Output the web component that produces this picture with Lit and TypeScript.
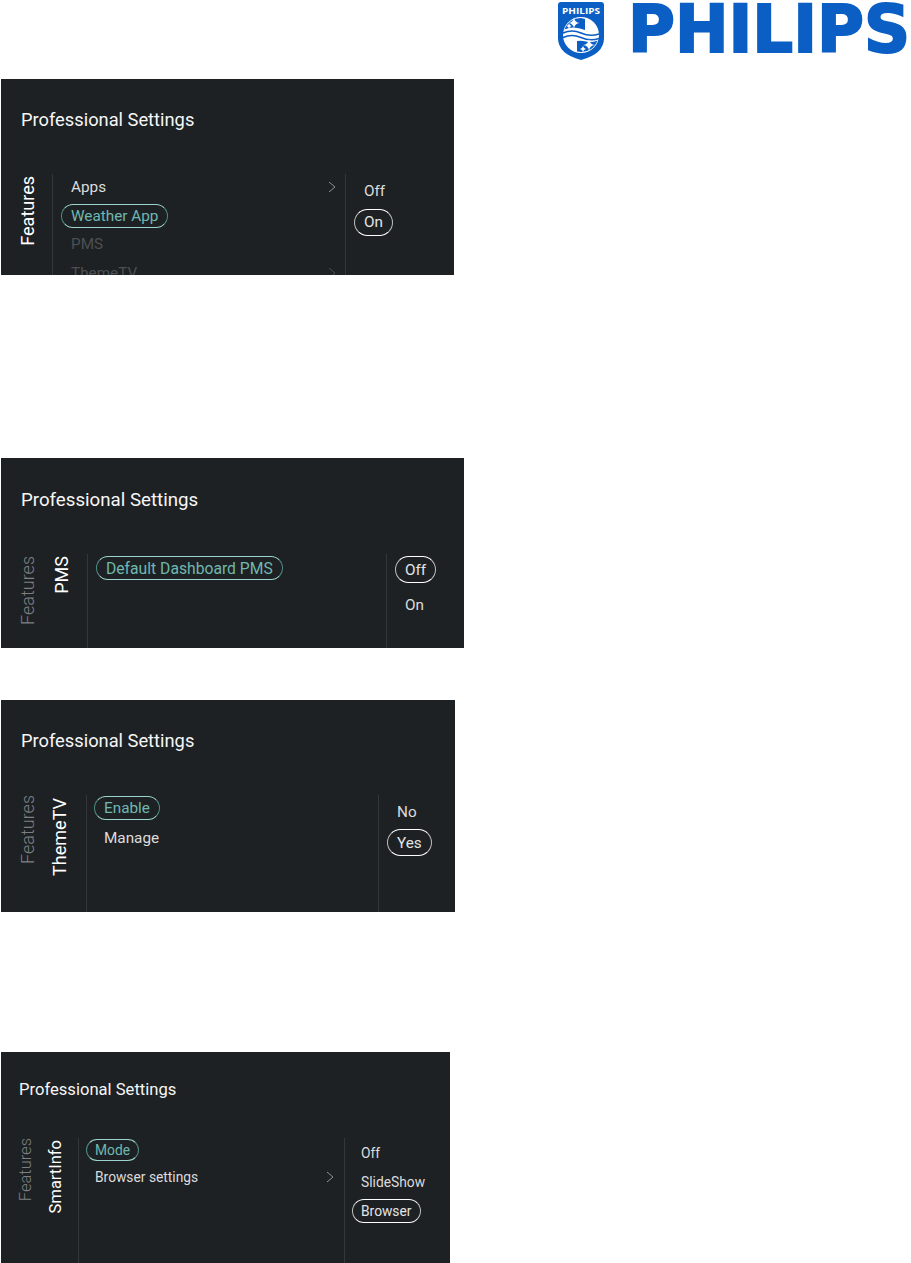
import { LitElement, html, css, svg } from "lit";
import { customElement, property } from "lit/decorators.js";

interface Row { label: string; selected?: boolean; dim?: boolean; arrow?: boolean }
interface PanelData {
  cls: string;
  rails: { label: string; active?: boolean }[];
  items: Row[];
  options: Row[];
}

const star = (cx: number, cy: number, r: number) =>
  svg`<path d="M${cx} ${cy - r}Q${cx + 0.6} ${cy - 0.6} ${cx + r} ${cy}Q${cx + 0.6} ${cy + 0.6} ${cx} ${cy + r}Q${cx - 0.6} ${cy + 0.6} ${cx - r} ${cy}Q${cx - 0.6} ${cy - 0.6} ${cx} ${cy - r}Z" fill="#fff"/>`;

const panels: PanelData[] = [
  {
    cls: "p1",
    rails: [{ label: "Features", active: true }],
    items: [
      { label: "Apps", arrow: true },
      { label: "Weather App", selected: true },
      { label: "PMS", dim: true },
      { label: "ThemeTV", dim: true, arrow: true },
    ],
    options: [{ label: "Off" }, { label: "On", selected: true }],
  },
  {
    cls: "p2",
    rails: [{ label: "Features" }, { label: "PMS", active: true }],
    items: [{ label: "Default Dashboard PMS", selected: true }],
    options: [{ label: "Off", selected: true }, { label: "On" }],
  },
  {
    cls: "p3",
    rails: [{ label: "Features" }, { label: "ThemeTV", active: true }],
    items: [{ label: "Enable", selected: true }, { label: "Manage" }],
    options: [{ label: "No" }, { label: "Yes", selected: true }],
  },
  {
    cls: "p4",
    rails: [{ label: "Features" }, { label: "SmartInfo", active: true }],
    items: [
      { label: "Mode", selected: true },
      { label: "Browser settings", arrow: true },
    ],
    options: [
      { label: "Off" },
      { label: "SlideShow" },
      { label: "Browser", selected: true },
    ],
  },
];

@customElement("settings-panel")
class SettingsPanel extends LitElement {
  @property({ attribute: false }) data!: PanelData;

  static styles = css`
    :host { display: block; }
    .panel {
      margin-left: 1px;
      background: #1e2124;
      color: #f4f4f4;
      font-family: Roboto, "Liberation Sans", sans-serif;
      overflow: hidden;
      display: flex;
      flex-direction: column;
    }
    .title { font-weight: 400; color: #f6f6f6; white-space: nowrap; }
    .body { display: flex; flex: 1; min-height: 0; }
    .rails { display: flex; }
    .rail { display: flex; justify-content: center; }
    .rail span {
      writing-mode: vertical-rl;
      transform: rotate(180deg);
      height: max-content;
      color: #7d8082;
      line-height: 1;
      font-weight: 300;
    }
    .rail.active span { color: #fff; font-weight: 400; }
    .list {
      flex: 1;
      display: flex;
      flex-direction: column;
      border-left: 1px solid #33363a;
      border-right: 1px solid #33363a;
    }
    .opts { display: flex; flex-direction: column; align-items: flex-start; box-sizing: border-box; }
    .row { display: flex; align-items: center; flex: none; }
    .item {
      display: flex;
      align-items: center;
      height: 100%;
      box-sizing: border-box;
      border: 1px solid transparent;
      border-radius: 999px;
      white-space: nowrap;
      color: #dcdcdc;
    }
    .list .sel { color: #6fb8af; border-color: #9ad6cf #4f8a85; }
    .opts .sel { color: #e4e4e4; border-color: #fff #bdbdbd; }
    .dim { color: #4c4f52; }
    .chev { margin-left: auto; flex: none; }

    .p1 .panel { width: 453px; height: 196px; }
    .p1 .title { font-size: 18.3px; line-height: 24px; padding: 29px 0 0 20px; height: 66px; }
    .p1 .rail { width: 51px; }
    .p1 .rail span { font-size: 18px; margin: 2px 0 0 2px; }
    .p1 .list { padding: 1px 9px 0 8px; gap: 4.5px; font-size: 15.3px; }
    .p1 .list .row { height: 24px; }
    .p1 .opts { width: 108px; padding: 3px 0 0 8px; gap: 4.5px; font-size: 15.3px; }
    .p1 .opts .row { height: 27px; }
    .p1 .item { padding: 0 9px; }

    .p2 .panel { width: 463px; height: 190px; }
    .p2 .title { font-size: 18.7px; line-height: 24px; padding: 30px 0 0 20px; height: 66px; }
    .p2 .rails { width: 86px; }
    .p2 .rail:first-child { width: 54px; }
    .p2 .rail:last-child { width: 14px; }
    .p2 .rail { margin-top: 2px; }
    .p2 .rail span { font-size: 18px; }
    .p2 .list { padding: 2px 9px 0 8px; font-size: 15.7px; }
    .p2 .list .row { height: 24px; }
    .p2 .opts { width: 77px; padding: 2px 0 0 8px; gap: 8.5px; font-size: 15.3px; }
    .p2 .opts .row { height: 27px; }
    .p2 .item { padding: 0 9px; }

    .p3 .panel { width: 454px; height: 212px; }
    .p3 .title { font-size: 18.3px; line-height: 24px; padding: 29px 0 0 20px; height: 66px; }
    .p3 .rails { width: 85px; }
    .p3 .rail:first-child { width: 54px; }
    .p3 .rail:last-child { width: 10px; margin-top: 3px; }
    .p3 .rail span { font-size: 18px; }
    .p3 .list { padding: 1px 9px 0 7px; gap: 6px; font-size: 15.3px; }
    .p3 .list .row { height: 24px; }
    .p3 .opts { width: 76px; padding: 3.5px 0 0 8px; gap: 3.5px; font-size: 15.3px; }
    .p3 .opts .row { height: 27px; }
    .p3 .item { padding: 0 9px; }

    .p4 .panel { width: 449px; height: 211px; }
    .p4 .title { font-size: 16.6px; line-height: 22px; padding: 27px 0 0 18px; height: 59px; }
    .p4 .rails { width: 77px; }
    .p4 .rail:first-child { width: 50px; }
    .p4 .rail:last-child { width: 10px; margin-top: 2px; }
    .p4 .rail span { font-size: 16.5px; }
    .p4 .list { padding: 1px 10px 0 7px; gap: 5px; font-size: 13.8px; }
    .p4 .list .row { height: 22px; }
    .p4 .opts { width: 105px; padding: 3px 0 0 7px; gap: 5px; font-size: 13.8px; }
    .p4 .opts .row { height: 24px; }
    .p4 .item { padding: 0 8px; }
  `;

  private chev(dim?: boolean) {
    return html`<svg class="chev" width="8" height="12" viewBox="0 0 8 12" fill="none"
      stroke=${dim ? "#4c4f52" : "#8e9193"} stroke-width="1"><path d="M1 1l6 5-6 5"/></svg>`;
  }

  render() {
    const d = this.data;
    return html`<div class=${d.cls}>
      <section class="panel">
        <div class="title">Professional Settings</div>
        <div class="body">
          <div class="rails">
            ${d.rails.map(
              (r) => html`<div class="rail ${r.active ? "active" : ""}"><span>${r.label}</span></div>`
            )}
          </div>
          <div class="list">
            ${d.items.map(
              (i) => html`<div class="row">
                <span class="item ${i.selected ? "sel" : ""} ${i.dim ? "dim" : ""}">${i.label}</span>
                ${i.arrow ? this.chev(i.dim) : ""}
              </div>`
            )}
          </div>
          <div class="opts">
            ${d.options.map(
              (o) => html`<div class="row"><span class="item ${o.selected ? "sel" : ""}">${o.label}</span></div>`
            )}
          </div>
        </div>
      </section>
    </div>`;
  }
}

@customElement("app-root")
export class AppRoot extends LitElement {
  static styles = css`
    :host {
      display: block;
      width: 911px;
      height: 1263px;
      background: #fff;
      overflow: hidden;
    }
    header {
      display: flex;
      justify-content: flex-end;
      align-items: flex-start;
      gap: 24px;
      height: 79px;
      padding: 2px 1px 0 0;
      box-sizing: border-box;
    }
    .word { display: block; }
    .gap1 { margin-top: 183px; }
    .gap2 { margin-top: 52px; }
    .gap3 { margin-top: 140px; }
    .wm {
      font-family: "DejaVu Sans", sans-serif;
      font-weight: 700;
      fill: #0b5fc4;
      stroke: #0b5fc4;
      stroke-width: 2px;
    }
    .sm {
      font-family: "Open Sans", "Liberation Sans", sans-serif;
      font-weight: 700;
      fill: #fff;
    }
  `;

  private shield() {
    return html`<svg width="46" height="58" viewBox="0 0 46 58">
      <path d="M3 0H43Q46 0 46 3V36Q46 52 23 58Q0 52 0 36V3Q0 0 3 0Z" fill="#0b5fc4"/>
      <text class="sm" x="23" y="11.5" font-size="9.5" text-anchor="middle" textLength="38" lengthAdjust="spacingAndGlyphs">PHILIPS</text>
      <circle cx="23" cy="33" r="18" fill="#fff"/>
      <path d="M23 16A17 17 0 0 0 6.6 27.5Q11 25.5 15 25.5Q21 25.5 27 28L27 17Z" fill="#0b5fc4"/>
      <path d="M23 50A17 17 0 0 0 39.4 38.5Q34 41 28 39.5Q24 38.5 19 39L19 49.5Z" fill="#0b5fc4"/>
      <path d="M5 31Q14 27 23 31Q32 35 41 32" fill="none" stroke="#0b5fc4" stroke-width="1.6"/>
      <path d="M5 35.5Q14 31.5 23 35.5Q32 39.5 41 36.5" fill="none" stroke="#0b5fc4" stroke-width="1.6"/>
      ${star(16, 21, 5.5)}${star(11, 24, 2.5)}
      ${star(31, 43, 6)}${star(25, 47, 3)}
    </svg>`;
  }

  render() {
    return html`
      <header>
        ${this.shield()}
        <svg class="word" width="282" height="60" viewBox="0 0 282 60">
          <text class="wm" x="0" y="50" font-size="65" textLength="282" lengthAdjust="spacingAndGlyphs">PHILIPS</text>
        </svg>
      </header>
      <settings-panel .data=${panels[0]}></settings-panel>
      <settings-panel class="gap1" .data=${panels[1]}></settings-panel>
      <settings-panel class="gap2" .data=${panels[2]}></settings-panel>
      <settings-panel class="gap3" .data=${panels[3]}></settings-panel>
    `;
  }
}
